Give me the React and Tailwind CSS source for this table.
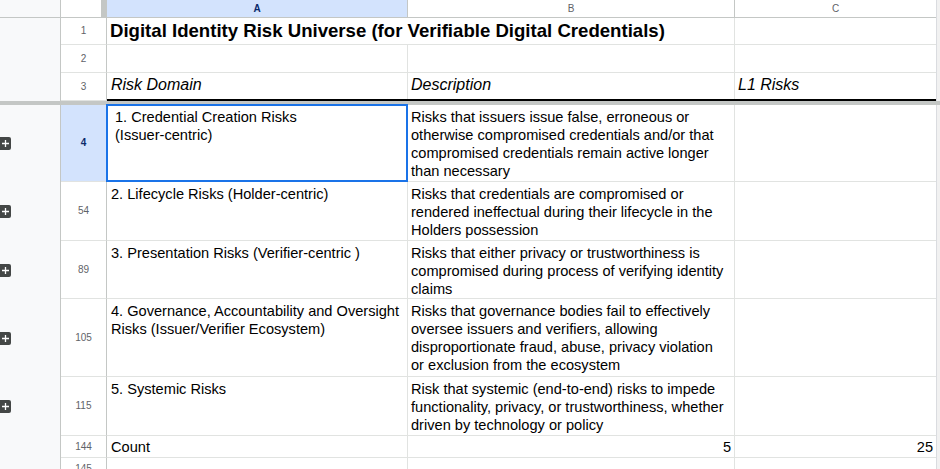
import React from 'react';

const rows = [
  {
    n: '4',
    h: 'h-[77px]',
    a: ['1. Credential Creation Risks', '(Issuer-centric)'],
    b: [
      'Risks that issuers issue false, erroneous or',
      'otherwise compromised credentials and/or that',
      'compromised credentials remain active longer',
      'than necessary',
    ],
    selected: true,
  },
  {
    n: '54',
    h: 'h-[59px]',
    a: ['2. Lifecycle Risks (Holder-centric)'],
    b: [
      'Risks that credentials are compromised or',
      'rendered ineffectual during their lifecycle in the',
      'Holders possession',
    ],
  },
  {
    n: '89',
    h: 'h-[58px]',
    a: ['3. Presentation Risks (Verifier-centric )'],
    b: [
      'Risks that either privacy or trustworthiness is',
      'compromised during process of verifying identity',
      'claims',
    ],
  },
  {
    n: '105',
    h: 'h-[78px]',
    a: ['4. Governance, Accountability and Oversight', 'Risks (Issuer/Verifier Ecosystem)'],
    b: [
      'Risks that governance bodies fail to effectively',
      'oversee issuers and verifiers, allowing',
      'disproportionate fraud, abuse, privacy violation',
      'or exclusion from the ecosystem',
    ],
  },
  {
    n: '115',
    h: 'h-[59px]',
    a: ['5. Systemic Risks'],
    b: [
      'Risk that systemic (end-to-end) risks to impede',
      'functionality, privacy, or trustworthiness, whether',
      'driven by technology or policy',
    ],
  },
];

const PlusBox = () => (
  <div className="w-[11px] h-[13px] bg-[#444746] rounded-r-[2px] flex items-center justify-center">
    <svg width="9" height="9" viewBox="0 0 9 9">
      <path d="M4.5 1v7M1 4.5h7" stroke="#fff" strokeWidth="1.3" />
    </svg>
  </div>
);

const Gutter = ({ children }) => (
  <div className="w-[61px] shrink-0 bg-[#f8f9fa] border-r border-[#c4c7c5] flex items-center">
    {children}
  </div>
);

const RowHead = ({ children, active }) => (
  <div
    className={`w-[46px] shrink-0 border-r border-b border-r-[#c4c7c5] border-b-[#e1e3e1] flex items-center justify-center text-[10px] ${
      active ? 'bg-[#d3e3fd] text-[#0b2a6b] font-bold' : 'bg-white text-[#5f6368]'
    }`}
  >
    {children}
  </div>
);

const Scroll = () => <div className="flex-1 bg-[#f1f1f1] border-l border-[#dadce0]" />;

export default function App() {
  return (
    <div
      className="w-[940px] h-[469px] overflow-hidden bg-white text-[14.6px] text-black leading-[18px]"
      style={{ fontFamily: '"Liberation Sans", Arial, sans-serif' }}
    >
      {/* column headers */}
      <div className="flex h-[18px]">
        <div className="w-[61px] shrink-0 bg-[#f8f9fa] border-r border-b border-[#c4c7c5]" />
        <div className="w-[46px] shrink-0 flex border-b border-r border-[#c4c7c5]">
          <div className="flex-1 bg-white" />
          <div className="w-[5px] bg-[#c4c7c5]" />
        </div>
        <div className="w-[301px] shrink-0 bg-[#d3e3fd] border-r border-b border-[#c4c7c5] flex items-center justify-center text-[10px] font-bold text-[#0b2a6b]">
          A
        </div>
        <div className="w-[327px] shrink-0 bg-white border-r border-b border-[#c4c7c5] flex items-center justify-center text-[10px] text-[#5f6368]">
          B
        </div>
        <div className="w-[201px] shrink-0 bg-white border-b border-[#c4c7c5] flex items-center justify-center text-[10px] text-[#5f6368]">
          C
        </div>
        <Scroll />
      </div>

      {/* row 1 */}
      <div className="flex h-[27px]">
        <Gutter />
        <RowHead>1</RowHead>
        <div className="w-[628px] shrink-0 border-r border-b border-[#e1e3e1] flex items-end px-[3px] pb-[2px] text-[18.6px] leading-[22px] font-bold whitespace-nowrap">
          Digital Identity Risk Universe (for Verifiable Digital Credentials)
        </div>
        <div className="w-[201px] shrink-0 border-b border-[#e1e3e1]" />
        <Scroll />
      </div>

      {/* row 2 */}
      <div className="flex h-[28px]">
        <Gutter />
        <RowHead>2</RowHead>
        <div className="w-[301px] shrink-0 border-r border-b border-[#e1e3e1]" />
        <div className="w-[327px] shrink-0 border-r border-b border-[#e1e3e1]" />
        <div className="w-[201px] shrink-0 border-b border-[#e1e3e1]" />
        <Scroll />
      </div>

      {/* row 3 */}
      <div className="flex h-[28px]">
        <Gutter />
        <RowHead>3</RowHead>
        <div className="flex border-b-2 border-black">
          <div className="w-[301px] shrink-0 border-r border-[#e1e3e1] flex items-end px-[4px] pb-[5px] text-[16px] italic">
            Risk Domain
          </div>
          <div className="w-[327px] shrink-0 border-r border-[#e1e3e1] flex items-end px-[3px] pb-[5px] text-[16px] italic">
            Description
          </div>
          <div className="w-[201px] shrink-0 flex items-end px-[3px] pb-[5px] text-[16px] italic">
            L1 Risks
          </div>
        </div>
        <Scroll />
      </div>

      {/* frozen divider */}
      <div className="h-[4px] bg-[#c4c7c5]" />

      {rows.map((r) => (
        <div key={r.n} className={`flex ${r.h}`}>
          <Gutter>
            <PlusBox />
          </Gutter>
          <RowHead active={r.selected}>{r.n}</RowHead>
          <div
            className={`relative w-[301px] shrink-0 border-r border-b border-[#e1e3e1] pt-[3px] ${
              r.selected ? 'pl-[8px]' : 'pl-[4px]'
            } pr-[3px]`}
          >
            {r.a.map((line) => (
              <div key={line} className="whitespace-nowrap">
                {line}
              </div>
            ))}
            {r.selected && (
              <div className="absolute -left-[1px] -top-[1px] w-[302px] h-[78px] border-2 border-[#1a73e8]" />
            )}
          </div>
          <div className="w-[327px] shrink-0 border-r border-b border-[#e1e3e1] pt-[3px] px-[3px]">
            {r.b.map((line) => (
              <div key={line} className="whitespace-nowrap">
                {line}
              </div>
            ))}
          </div>
          <div className="w-[201px] shrink-0 border-b border-[#e1e3e1]" />
          <Scroll />
        </div>
      ))}

      {/* count row */}
      <div className="flex h-[22px]">
        <Gutter />
        <RowHead>144</RowHead>
        <div className="w-[301px] shrink-0 border-r border-b border-[#e1e3e1] flex items-center px-[4px]">
          Count
        </div>
        <div className="w-[327px] shrink-0 border-r border-b border-[#e1e3e1] flex items-center justify-end px-[3px]">
          5
        </div>
        <div className="w-[201px] shrink-0 border-b border-[#e1e3e1] flex items-center justify-end px-[3px]">
          25
        </div>
        <Scroll />
      </div>

      {/* row 145 */}
      <div className="flex h-[22px]">
        <Gutter />
        <RowHead>145</RowHead>
        <div className="w-[301px] shrink-0 border-r border-b border-[#e1e3e1]" />
        <div className="w-[327px] shrink-0 border-r border-b border-[#e1e3e1]" />
        <div className="w-[201px] shrink-0 border-b border-[#e1e3e1]" />
        <Scroll />
      </div>
    </div>
  );
}
